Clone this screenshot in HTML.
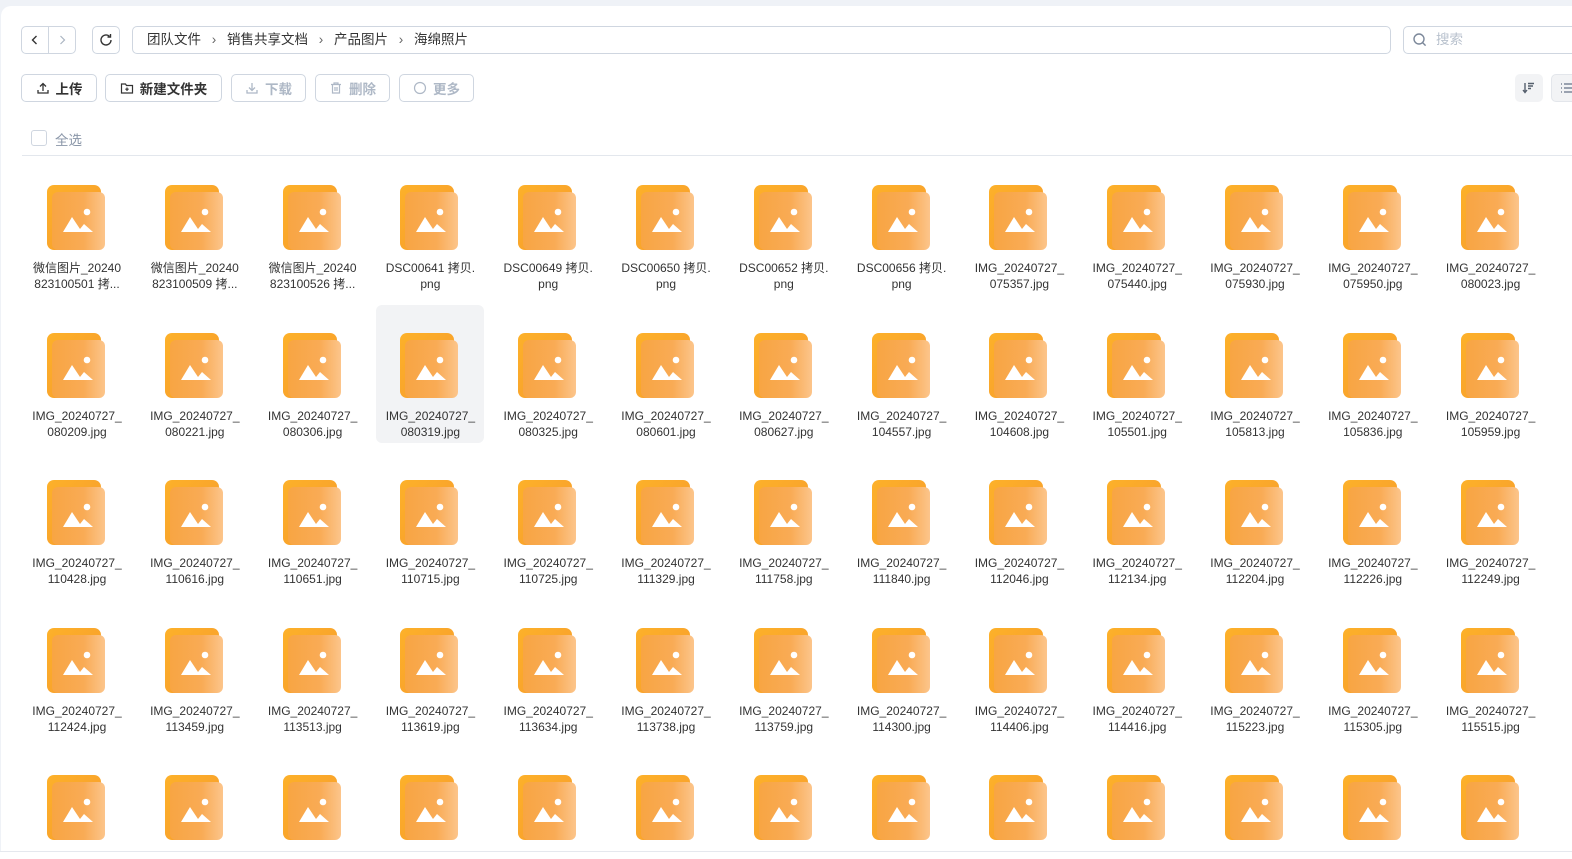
<!DOCTYPE html>
<html style="overflow:hidden;width:1572px;height:859px"><head><meta charset="utf-8"><style>
*{box-sizing:border-box;margin:0;padding:0}
body{width:1572px;height:859px;overflow:hidden;background:#eff2f7;font-family:"Liberation Sans","Noto Sans CJK SC",sans-serif;color:#333;position:relative}
.panel{position:absolute;left:1px;top:6px;width:1571px;height:845px;background:#fff;border-radius:10px 0 0 0;overflow:hidden}
.bottom{position:absolute;left:0;top:851px;width:1572px;height:8px;background:#fff;border-top:1px solid #e5e8ee}
.b{position:absolute;border:1px solid #cfd6e0;border-radius:5px;background:#fff}
.btn{position:absolute;top:74px;height:28px;border:1px solid #cfd6e0;border-radius:5px;font-size:13.5px;font-weight:bold;display:flex;align-items:center;justify-content:center;gap:6px;color:#333}
.btn.d{color:#aeb8c6}
.cell{position:absolute;width:108px;height:138px;border-radius:6px;text-align:center;font-size:12px;line-height:16px;color:#333}
.cell.h{background:#f2f3f5}
.cell .t{position:absolute;top:103px;left:0;width:108px}
</style></head><body>
<div class="panel"></div>
<div class="b" style="left:21px;top:26px;width:55px;height:28px"></div>
<div style="position:absolute;left:48px;top:27px;width:1px;height:26px;background:#cfd6e0"></div>
<svg style="position:absolute;left:29px;top:34px" width="12" height="12"><path d="M7.5 2L3.5 6l4 4" stroke="#333" stroke-width="1.4" fill="none"/></svg>
<svg style="position:absolute;left:56px;top:34px" width="12" height="12"><path d="M4.5 2l4 4-4 4" stroke="#aab4c2" stroke-width="1.2" fill="none"/></svg>
<div class="b" style="left:92px;top:26px;width:28px;height:28px"></div>
<svg style="position:absolute;left:98px;top:32px" width="16" height="16"><path d="M13 8a5 5 0 1 1-1.6-3.7" stroke="#333" stroke-width="1.4" fill="none"/><path d="M12.5 2v3h-3" stroke="#333" stroke-width="1.4" fill="none"/></svg>
<div class="b" style="left:132px;top:26px;width:1259px;height:28px;font-size:13.5px;line-height:26px;padding-left:14px;color:#333">团队文件 <span style="margin:0 7px;color:#666">›</span> 销售共享文档 <span style="margin:0 7px;color:#666">›</span> 产品图片 <span style="margin:0 7px;color:#666">›</span> 海绵照片</div>
<div class="b" style="left:1403px;top:26px;width:180px;height:28px;font-size:13.5px;line-height:26px;padding-left:32px;color:#b8c1cd">搜索</div>
<svg style="position:absolute;left:1412px;top:32px" width="16" height="16"><circle cx="7" cy="7" r="5" stroke="#7c889a" stroke-width="1.4" fill="none"/><path d="M10.6 10.6l3 3" stroke="#7c889a" stroke-width="1.4"/></svg>
<div class="btn" style="left:21px;width:76px"><svg width="14" height="14"><path d="M7 10V2.5M4 5.5l3-3 3 3M2 9v3h10V9" stroke="#333" stroke-width="1.3" fill="none"/></svg>上传</div>
<div class="btn" style="left:105px;width:117px"><svg width="14" height="14"><path d="M1.5 3h4l1 1.5h6v7.5h-11z" stroke="#333" stroke-width="1.2" fill="none"/><path d="M7 6.5v3.5M5.3 8.2h3.4" stroke="#333" stroke-width="1.2"/></svg>新建文件夹</div>
<div class="btn d" style="left:231px;width:75px"><svg width="14" height="14"><path d="M7 2v7.5M4 6.5l3 3 3-3M2 9v3h10V9" stroke="#aeb8c6" stroke-width="1.3" fill="none"/></svg>下载</div>
<div class="btn d" style="left:315px;width:75px"><svg width="14" height="14"><path d="M2 3.5h10M5 3.5V2h4v1.5M3.5 3.5v8.5h7V3.5M6 6v4M8 6v4" stroke="#aeb8c6" stroke-width="1.2" fill="none"/></svg>删除</div>
<div class="btn d" style="left:399px;width:75px"><svg width="14" height="14"><circle cx="7" cy="7" r="5.5" stroke="#aeb8c6" stroke-width="1.2" fill="none"/></svg>更多</div>
<div style="position:absolute;left:1515px;top:74px;width:28px;height:28px;background:#f2f3f5;border-radius:5px"></div>
<svg style="position:absolute;left:1521px;top:80px" width="16" height="16"><path d="M4 3v9M2 10l2 2.5 2-2.5M7 3.5h6M7 6h5M7 8.5h3" stroke="#555f6d" stroke-width="1.4" fill="none"/></svg>
<div style="position:absolute;left:1551px;top:74px;width:30px;height:28px;background:#f2f3f5;border:1px solid #e3e6eb;border-radius:5px"></div>
<svg style="position:absolute;left:1560px;top:82px" width="12" height="12"><path d="M1 2h1M1 6h1M1 10h1M4 2h8M4 6h8M4 10h8" stroke="#7c889a" stroke-width="1.4"/></svg>
<div style="position:absolute;left:31px;top:130px;width:16px;height:16px;border:1px solid #cfd6e0;border-radius:3px"></div>
<div style="position:absolute;left:55px;top:129px;font-size:13.5px;color:#8a96a8">全选</div>
<div style="position:absolute;left:22px;top:155px;width:1550px;height:1px;background:#e3e7ed"></div>
<svg width="0" height="0" style="position:absolute"><defs>
<linearGradient id="g1" x1="0" y1="0" x2="1" y2="1"><stop offset="0" stop-color="#fdb12a"/><stop offset="1" stop-color="#f79b2c"/></linearGradient>
<linearGradient id="g2" x1="0" y1="0" x2="1" y2="0"><stop offset="0" stop-color="#f8a543"/><stop offset="0.6" stop-color="#f9ab55"/><stop offset="1" stop-color="#fcc58b"/></linearGradient>
</defs></svg>
<div id="grid" style="position:absolute;left:0;top:0;width:1572px;height:851px;overflow:hidden"></div>
<script>
var names=[["微信图片_20240","823100501 拷..."],["微信图片_20240","823100509 拷..."],["微信图片_20240","823100526 拷..."],["DSC00641 拷贝.","png"],["DSC00649 拷贝.","png"],["DSC00650 拷贝.","png"],["DSC00652 拷贝.","png"],["DSC00656 拷贝.","png"]];
var ids=["075357","075440","075930","075950","080023","080209","080221","080306","080319","080325","080601","080627","104557","104608","105501","105813","105836","105959","110428","110616","110651","110715","110725","111329","111758","111840","112046","112134","112204","112226","112249","112424","113459","113513","113619","113634","113738","113759","114300","114406","114416","115223","115305","115515"];
ids.forEach(function(i){names.push(["IMG_20240727_",i+".jpg"])});
var icon='<svg style="position:absolute;left:23px;top:28px" width="60" height="66" viewBox="0 0 60 66"><rect x="1" y="0" width="54" height="65" rx="7" fill="url(#g1)"/><rect x="6" y="7" width="53" height="58" rx="6" fill="url(#g2)"/><path d="M17 47l9-15 8 12 4-5 9 8z" fill="#fff"/><circle cx="41" cy="27" r="3.3" fill="#fff"/></svg>';
var h='';
for(var r=0;r<5;r++)for(var c=0;c<13;c++){var k=r*13+c;var x=23+c*117.8,y=157+r*147.6;var n=names[k];
h+='<div class="cell'+(k==16?' h':'')+'" style="left:'+x.toFixed(1)+'px;top:'+y.toFixed(1)+'px">'+icon+(n?'<div class="t">'+n[0]+'<br>'+n[1]+'</div>':'')+'</div>';}
document.getElementById('grid').innerHTML=h;
</script>
<div class="bottom"></div>
</body></html>
